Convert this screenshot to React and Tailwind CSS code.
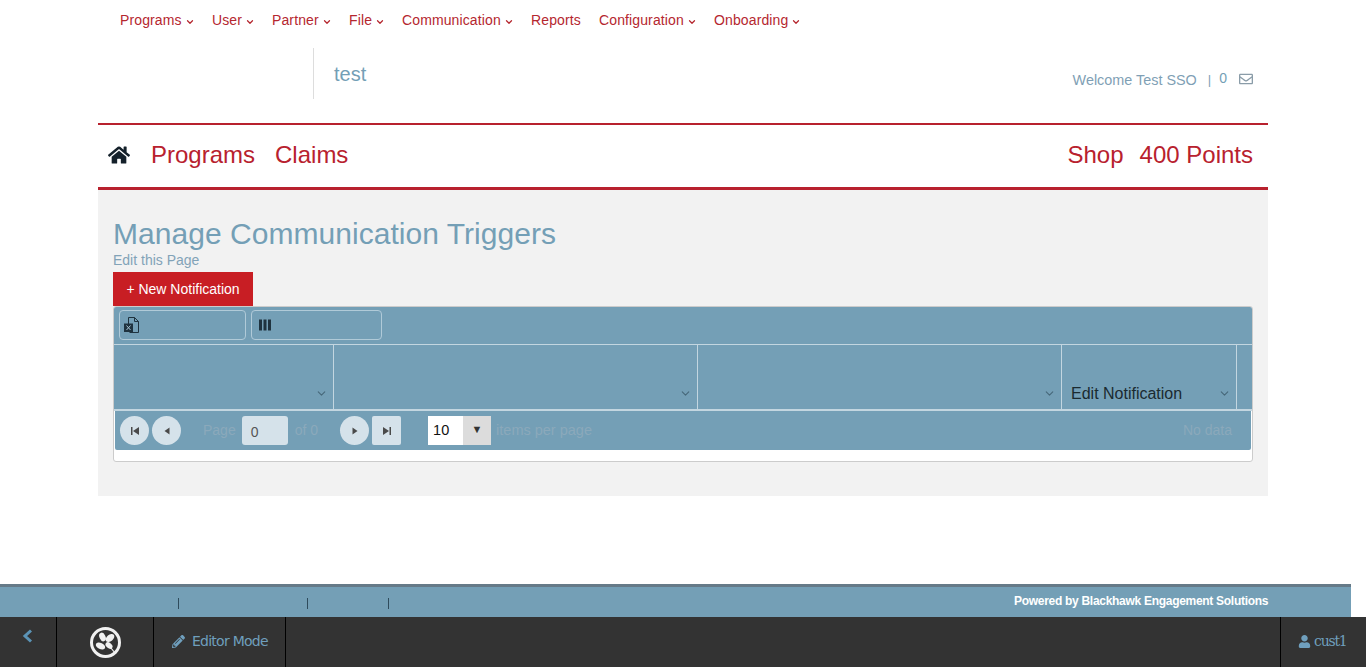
import { FaHome, FaPencilAlt, FaUser, FaRegEnvelope } from "react-icons/fa";
import { ChevronDown } from "lucide-react";

const menu = [
    { label: "Programs", width: "w-[92px]", arrow: true },
    { label: "User", width: "w-[60px]", arrow: true },
    { label: "Partner", width: "w-[77px]", arrow: true },
    { label: "File", width: "w-[53px]", arrow: true },
    { label: "Communication", width: "w-[129px]", arrow: true },
    { label: "Reports", width: "w-[68px]", arrow: false },
    { label: "Configuration", width: "w-[115px]", arrow: true },
    { label: "Onboarding", width: "w-[100px]", arrow: true },
];

function PagerButton({ round, children }) {
    return (
        <span className={`flex items-center justify-center w-[29px] h-[29px] bg-[#d5e2ea] text-[#4a4a4a] ${round ? "rounded-full" : "rounded-[2px]"}`}>
            {children}
        </span>
    );
}

function HeaderCell({ width, label }) {
    return (
        <div className={`${width} shrink-0 flex items-end justify-between pl-[9px] pr-[5px] pb-[5px] border-r border-[#c3d6e0]`}>
            <span className="text-[16px] leading-[20px] text-[#1a2a30]">{label}</span>
            <ChevronDown size={13} strokeWidth={2} className="text-[#47687a] mb-[4px]" />
        </div>
    );
}

export default function App() {
    return (
        <div className="relative h-[667px] overflow-hidden bg-white font-['Liberation_Sans',Arial,sans-serif]">
            <div className="w-[1170px] mx-auto">
                {/* Top menu */}
                <nav className="flex h-[48px] pl-[22px] pt-[12px] text-[14px] leading-[16px] tracking-[0.12px] text-[#b5272f]">
                    {menu.map((item) => (
                        <span key={item.label} className={`${item.width} flex items-start gap-[3px] whitespace-nowrap`}>
                            {item.label}
                            {item.arrow && <ChevronDown size={10} strokeWidth={3} className="mt-[5px]" />}
                        </span>
                    ))}
                </nav>

                {/* Site header */}
                <div className="flex h-[51px] pl-[215px] pr-[15px]">
                    <div className="border-l border-[#dddddd] pl-[20px] pt-[14px] text-[20px] leading-[24px] text-[#749fb6]">test</div>
                    <div className="ml-auto flex items-start pt-[24px] text-[14.4px] leading-[17px] text-[#7f9fb5]">
                        <span>Welcome Test SSO</span>
                        <span className="ml-[11px] -mt-[1px] text-[13px]">|</span>
                        <span className="ml-[8px] text-[14px] -mt-[2px] text-[#749fb6]">0</span>
                        <FaRegEnvelope size={14} className="ml-[12px] text-[#8a9ca8]" />
                    </div>
                </div>

                {/* Main nav band */}
                <div className="mt-[24px] flex items-center h-[67px] border-t-2 border-b-[3px] border-[#b8212e] pl-[10px] pr-[15px] pb-[2px] text-[24px] text-[#b8212e]">
                    <FaHome size={22} className="text-[#14202a]" />
                    <span className="ml-[21px]">Programs</span>
                    <span className="ml-[20px]">Claims</span>
                    <span className="ml-auto">Shop</span>
                    <span className="ml-[16px]">400 Points</span>
                </div>

                {/* Content */}
                <div className="h-[306px] bg-[#f2f2f2] px-[15px] pt-[26px]">
                    <h1 className="text-[30px] leading-[35px] tracking-[0.04px] text-[#749fb6]">Manage Communication Triggers</h1>
                    <div className="mt-[1px] text-[14px] leading-[16px] text-[#82a3b8]">Edit this Page</div>
                    <button className="block mt-[4px] w-[140px] h-[34px] bg-[#c81e24] text-[14px] text-white">+ New Notification</button>

                    {/* Grid */}
                    <div className="h-[156px] bg-white border border-[#cccccc] rounded-[3px] overflow-hidden">
                        <div className="flex gap-[5px] h-[38px] bg-[#749fb6] pl-[5px] pt-[3px] border-b border-[#c3d6e0]">
                            <span className="flex items-center w-[127px] h-[30px] pl-[4px] border border-[#b0cad8] rounded-[4px]">
                                <svg width="16" height="18" viewBox="0 0 16 18" fill="none" stroke="#1f333f" strokeWidth="1">
                                    <path d="M4.5 8V1.5h6l4 4v11h-9" />
                                    <path d="M10.5 1.5v4h4" />
                                    <rect x="0.5" y="8" width="8" height="7.5" fill="#1f333f" />
                                    <path d="M2.5 9.5l4 4.5M6.5 9.5l-4 4.5" stroke="#a9c4d3" />
                                </svg>
                            </span>
                            <span className="flex items-center w-[131px] h-[30px] pl-[7px] border border-[#b0cad8] rounded-[4px]">
                                <svg width="12" height="12" viewBox="0 0 12 12" fill="#1f333f">
                                    <path d="M0 0.5h3v11H0zM4.5 0.5h3v11h-3zM9 0.5h3v11H9z" />
                                </svg>
                            </span>
                        </div>
                        <div className="flex h-[66px] bg-[#749fb6] border-b-2 border-[#c3d6e0]">
                            <HeaderCell width="w-[220px]" label="" />
                            <HeaderCell width="w-[364px]" label="" />
                            <HeaderCell width="w-[364px]" label="" />
                            <HeaderCell width="w-[175px]" label="Edit Notification" />
                        </div>
                        <div className="flex items-center h-[39px] mx-px bg-[#749fb6] rounded-b-[2px] pl-[5px] pr-[19px] text-[14px] text-[#8ba9bb]">
                            <PagerButton round><svg width="10" height="10" viewBox="0 0 10 10" fill="currentColor"><path d="M1 1h1.5v8H1zM9 1v8L3 5z" /></svg></PagerButton>
                            <span className="ml-[3px]"><PagerButton round><svg width="10" height="10" viewBox="0 0 10 10" fill="currentColor"><path d="M7.5 1.5v7L2.5 5z" /></svg></PagerButton></span>
                            <span className="ml-[22px]">Page</span>
                            <span className="ml-[6px] w-[46px] h-[29px] pl-[9px] pt-[7px] bg-[#d5e2ea] rounded-[3px] text-[#555555] leading-[18px]">0</span>
                            <span className="ml-[7px]">of 0</span>
                            <span className="ml-[22px]"><PagerButton round><svg width="10" height="10" viewBox="0 0 10 10" fill="currentColor"><path d="M2.5 1.5v7L7.5 5z" /></svg></PagerButton></span>
                            <span className="ml-[3px]"><PagerButton><svg width="10" height="10" viewBox="0 0 10 10" fill="currentColor"><path d="M7.5 1H9v8H7.5zM1 1v8l6-4z" /></svg></PagerButton></span>
                            <span className="ml-[27px] flex w-[63px] h-[29px] bg-white">
                                <span className="w-[35px] pl-[5px] pt-[5px] text-[14.5px] leading-[18px] text-[#111111]">10</span>
                                <span className="flex-1 flex items-center justify-center bg-[#dcdcdc] text-[11px] leading-none text-[#333333] pb-[3px]">▼</span>
                            </span>
                            <span className="ml-[5px] text-[14.5px]">items per page</span>
                            <span className="ml-auto">No data</span>
                        </div>
                    </div>
                </div>
            </div>

            {/* Footer */}
            <footer className="absolute left-0 bottom-[50px] w-[1351px] h-[33px] bg-[#749fb6] border-t-[3px] border-[#667a88]">
                <div className="flex items-center h-full pt-[3px] text-[12px] leading-none">
                    <span className="ml-[178px] w-px h-[11px] bg-[#2f4b5c]" />
                    <span className="ml-[128px] w-px h-[11px] bg-[#2f4b5c]" />
                    <span className="ml-[80px] w-px h-[11px] bg-[#2f4b5c]" />
                    <span className="ml-[625px] -mt-[6px] whitespace-nowrap font-bold tracking-[-0.29px] text-white">Powered by Blackhawk Engagement Solutions</span>
                </div>
            </footer>

            {/* Editor bar */}
            <div className="absolute left-0 right-0 bottom-0 flex h-[50px] bg-[#333333] text-[#6f9fbd]">
                <div className="w-[57px] border-r border-black pl-[22px] pt-[12px]">
                    <svg width="11" height="14" viewBox="0 0 11 14" fill="none" stroke="#5b93b5" strokeWidth="3">
                        <path d="M9 1.5L3 7l6 5.5" />
                    </svg>
                </div>
                <div className="w-[97px] flex items-center justify-center border-r border-black">
                    <svg width="33" height="33" viewBox="0 0 33 33" fill="#f1f1f1">
                        <circle cx="16.5" cy="16.5" r="14" fill="none" stroke="#f1f1f1" strokeWidth="3" />
                        <ellipse cx="13.5" cy="11" rx="3" ry="4.5" transform="rotate(-25 13.5 11)" />
                        <ellipse cx="21" cy="12" rx="3.2" ry="5" transform="rotate(50 21 12)" />
                        <ellipse cx="11.5" cy="20" rx="3" ry="5" transform="rotate(-65 11.5 20)" />
                        <ellipse cx="20" cy="19.500" rx="2.6" ry="4" transform="rotate(-50 20 19.500)" />
                        <path d="M22 22C23.500 24 25 26 27 27.500" fill="none" stroke="#f1f1f1" strokeWidth="1.2" />
                    </svg>
                </div>
                <div className="flex items-center w-[132px] pl-[18px] pb-[2px] gap-[7px] border-r border-black text-[14px] font-['DejaVu_Sans',sans-serif] tracking-[-0.75px]">
                    <FaPencilAlt size={13} />
                    <span>Editor Mode</span>
                </div>
                <div className="ml-auto flex items-center w-[86px] pl-[17px] pb-[2px] gap-[3px] border-l border-black text-[14px] font-['DejaVu_Serif',serif] tracking-[-1.2px]">
                    <FaUser size={13} />
                    <span>cust1</span>
                </div>
            </div>
        </div>
    );
}
